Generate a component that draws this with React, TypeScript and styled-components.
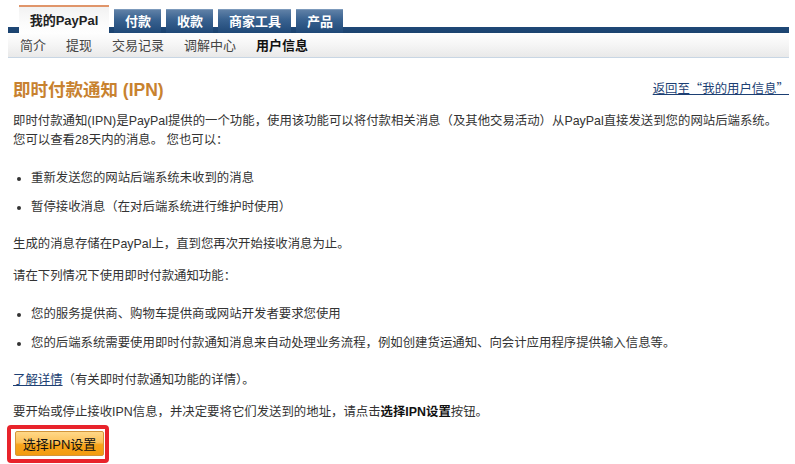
import React from 'react';
import styled, { createGlobalStyle } from 'styled-components';

const GlobalStyle = createGlobalStyle`
    html, body {
        margin: 0;
        padding: 0;
        background: #fff;
    }
    body {
        font-family: "Liberation Sans", "Noto Sans CJK SC", sans-serif;
        color: #333;
    }
`;

const mainTabs = ['付款', '收款', '商家工具', '产品'];
const subTabs = ['简介', '提现', '交易记录', '调解中心', '用户信息'];

function App() {
    return (
        <Page>
            <GlobalStyle />
            <TabBar>
                <ActiveTab>我的PayPal</ActiveTab>
                {mainTabs.map((t) => (
                    <Tab key={t}>{t}</Tab>
                ))}
            </TabBar>
            <SubNav>
                {subTabs.map((t, i) => (
                    <SubItem key={t} $current={i === subTabs.length - 1}>{t}</SubItem>
                ))}
            </SubNav>
            <Content>
                <TitleRow>
                    <Title>即时付款通知 (IPN)</Title>
                    <BackLink href="#">返回至“我的用户信息”</BackLink>
                </TitleRow>
                <Para>
                    即时付款通知(IPN)是PayPal提供的一个功能，使用该功能可以将付款相关消息（及其他交易活动）从PayPal直接发送到您的网站后端系统。您可以查看28天内的消息。 您也可以：
                </Para>
                <List>
                    <li>重新发送您的网站后端系统未收到的消息</li>
                    <li>暂停接收消息（在对后端系统进行维护时使用）</li>
                </List>
                <Para>生成的消息存储在PayPal上，直到您再次开始接收消息为止。</Para>
                <Para>请在下列情况下使用即时付款通知功能：</Para>
                <List>
                    <li>您的服务提供商、购物车提供商或网站开发者要求您使用</li>
                    <li>您的后端系统需要使用即时付款通知消息来自动处理业务流程，例如创建货运通知、向会计应用程序提供输入信息等。</li>
                </List>
                <Para>
                    <TextLink href="#">了解详情</TextLink>（有关即时付款通知功能的详情）。
                </Para>
                <Para $last>
                    要开始或停止接收IPN信息，并决定要将它们发送到的地址，请点击<b>选择IPN设置</b>按钮。
                </Para>
                <Highlight>
                    <OrangeButton type="button">选择IPN设置</OrangeButton>
                </Highlight>
            </Content>
        </Page>
    );
}

const Page = styled.div`
    padding: 0 6px 0 8px;
    font-size: 12.4px;
    line-height: 19px;
`;

const TabBar = styled.div`
    display: flex;
    align-items: flex-end;
    gap: 5px;
    height: 28px;
    padding: 5px 0 0 11px;
    background: linear-gradient(to bottom, #fff 0, #fff 27px, #1f4877 27px, #1b436f 33px);
    background-size: 100% 33px;
    background-repeat: no-repeat;
`;

const Tab = styled.div`
    height: 23px;
    padding: 0 10px 0 11px;
    display: flex;
    align-items: center;
    color: #fff;
    font-weight: bold;
    font-size: 13px;
    background: linear-gradient(to bottom, #5f80a6 0, #3a6391 40%, #1f4877 100%);
    border-top: 1px solid #7c9abc;
`;

const ActiveTab = styled.div`
    height: 26px;
    width: 90px;
    display: flex;
    align-items: center;
    justify-content: center;
    color: #222;
    font-weight: bold;
    font-size: 13px;
    border-top: 2px solid #e0956a;
    background: linear-gradient(to bottom, #f2f2f2 0, #fbfbfb 60%, #fefefe 100%);
`;

const SubNav = styled.div`
    display: flex;
    align-items: center;
    height: 24px;
    padding-left: 12px;
    background: linear-gradient(to bottom, #fefefe 0, #f6f6f6 45%, #e9e9e9 100%);
    border-bottom: 1px solid #c8d6e4;
    font-size: 13px;
`;

const SubItem = styled.span<{ $current?: boolean }>`
    margin-right: 20px;
    color: ${(p) => (p.$current ? '#111' : '#444')};
    font-weight: ${(p) => (p.$current ? 'bold' : 'normal')};
`;

const Content = styled.div`
    padding: 21px 0 0 5px;
`;

const TitleRow = styled.div`
    display: flex;
    justify-content: space-between;
    align-items: flex-start;
    margin-bottom: 11px;
`;

const Title = styled.h1`
    margin: 0;
    font-size: 17.5px;
    line-height: 22px;
    font-weight: bold;
    color: #c8822f;
`;

const BackLink = styled.a`
    font-family: "Noto Sans CJK SC", sans-serif;
    font-size: 12.4px;
    line-height: 19px;
    color: #1c3f73;
    text-decoration: underline;
`;

const Para = styled.p<{ $last?: boolean }>`
    margin: 0 0 ${(p) => (p.$last ? '3px' : '13px')};
    b {
        color: #111;
    }
`;

const TextLink = styled.a`
    color: #1c3f73;
    text-decoration: underline;
`;

const List = styled.ul`
    margin: 19px 0 18px;
    padding-left: 18px;
    li {
        margin-bottom: 10px;
    }
`;

const Highlight = styled.div`
    display: inline-flex;
    margin: 0 0 0 -6px;
    padding: 2px 1px 3px 4px;
    border: 4px solid #e8232b;
    border-radius: 4px;
`;

const OrangeButton = styled.button`
    font-family: inherit;
    font-size: 13px;
    color: #111;
    height: 25px;
    width: 89px;
    padding: 0;
    border: 1px solid #d3963a;
    border-radius: 2px;
    background: linear-gradient(to bottom, #ffd888 0, #fcc25a 45%, #f7a41c 55%, #f39c10 100%);
    cursor: pointer;
`;

export default App;
